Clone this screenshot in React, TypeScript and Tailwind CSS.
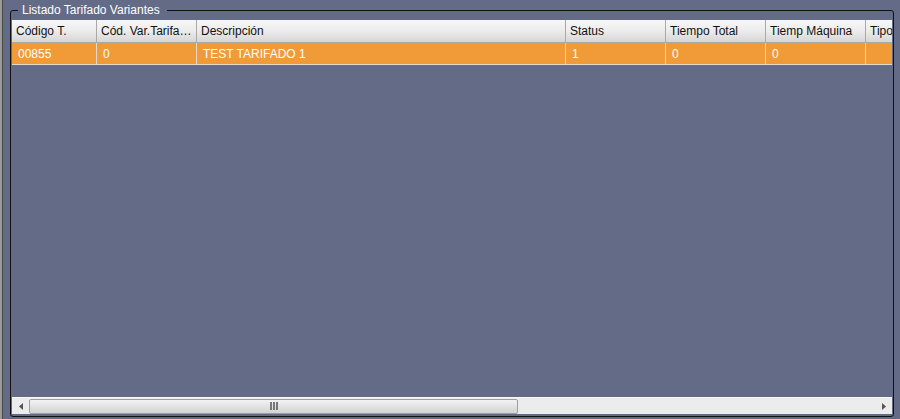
import React from 'react';

const columns = [
    { label: 'Código T.', width: 'w-[85px]' },
    { label: 'Cód. Var.Tarifa…', width: 'w-[100px]' },
    { label: 'Descripción', width: 'w-[369px]' },
    { label: 'Status', width: 'w-[100px]' },
    { label: 'Tiempo Total', width: 'w-[100px]' },
    { label: 'Tiemp Máquina', width: 'w-[100px]' },
    { label: 'Tipo', width: 'w-[100px]' },
];

const row = ['00855', '0', 'TEST TARIFADO 1', '1', '0', '0', ''];

export default function App() {
    return (
        <div className="w-[900px] h-[419px] bg-[#646b87] flex overflow-hidden font-['Liberation_Sans',Arial,sans-serif] text-[12px]">
            {/* window edge */}
            <div className="w-[3px] h-full bg-[#9b9b9b] border-r border-[#4a4a4a] shrink-0" />

            <fieldset className="ml-[7px] mt-[2px] w-[884px] h-[415px] border border-[#111] rounded-[3px] px-[1px] pb-[1px] flex flex-col min-w-0">
                <legend className="ml-[6px] pl-[4px] pr-[7px] text-white leading-[16px]">Listado Tarifado Variantes</legend>

                <div className="flex flex-col flex-1 min-h-0 mt-[2px]">
                    {/* header */}
                    <div className="flex h-[23px] overflow-hidden shrink-0">
                        {columns.map((c) => (
                            <div
                                key={c.label}
                                className={`${c.width} shrink-0 h-full pl-[4px] flex items-center bg-gradient-to-b from-[#f7f7f7] via-[#ececec] to-[#d6d6d6] border-r border-b border-[#a9a9a9] text-[#111] whitespace-nowrap overflow-hidden`}
                            >
                                {c.label}
                            </div>
                        ))}
                    </div>

                    {/* data row */}
                    <div className="flex h-[22px] overflow-hidden shrink-0">
                        {row.map((v, i) => (
                            <div
                                key={i}
                                className={`${columns[i].width} shrink-0 h-full pl-[6px] flex items-center bg-[#f09b37] border-r border-b border-[#e6d9cb] text-white whitespace-nowrap`}
                            >
                                {v}
                            </div>
                        ))}
                    </div>

                    <div className="flex-1" />

                    {/* horizontal scrollbar */}
                    <div className="h-[17px] shrink-0 flex items-center bg-[#ececec] border-t border-[#f8f8f8] mb-[1px]">
                        <div className="w-[17px] h-full flex items-center justify-center shrink-0">
                            <svg width="4" height="7" viewBox="0 0 4 7">
                                <path d="M4 0 L0 3.5 L4 7 Z" fill="#555" />
                            </svg>
                        </div>
                        <div className="w-[489px] h-[15px] rounded-[2px] border border-[#9f9f9f] bg-gradient-to-b from-[#f3f3f3] to-[#d3d3d3] flex items-center justify-center">
                            <div className="flex gap-[1px]">
                                <div className="w-[2px] h-[8px] bg-[#777]" />
                                <div className="w-[2px] h-[8px] bg-[#777]" />
                                <div className="w-[2px] h-[8px] bg-[#777]" />
                            </div>
                        </div>
                        <div className="flex-1" />
                        <div className="w-[17px] h-full flex items-center justify-center shrink-0">
                            <svg width="4" height="7" viewBox="0 0 4 7">
                                <path d="M0 0 L4 3.5 L0 7 Z" fill="#555" />
                            </svg>
                        </div>
                    </div>
                </div>
            </fieldset>
        </div>
    );
}
